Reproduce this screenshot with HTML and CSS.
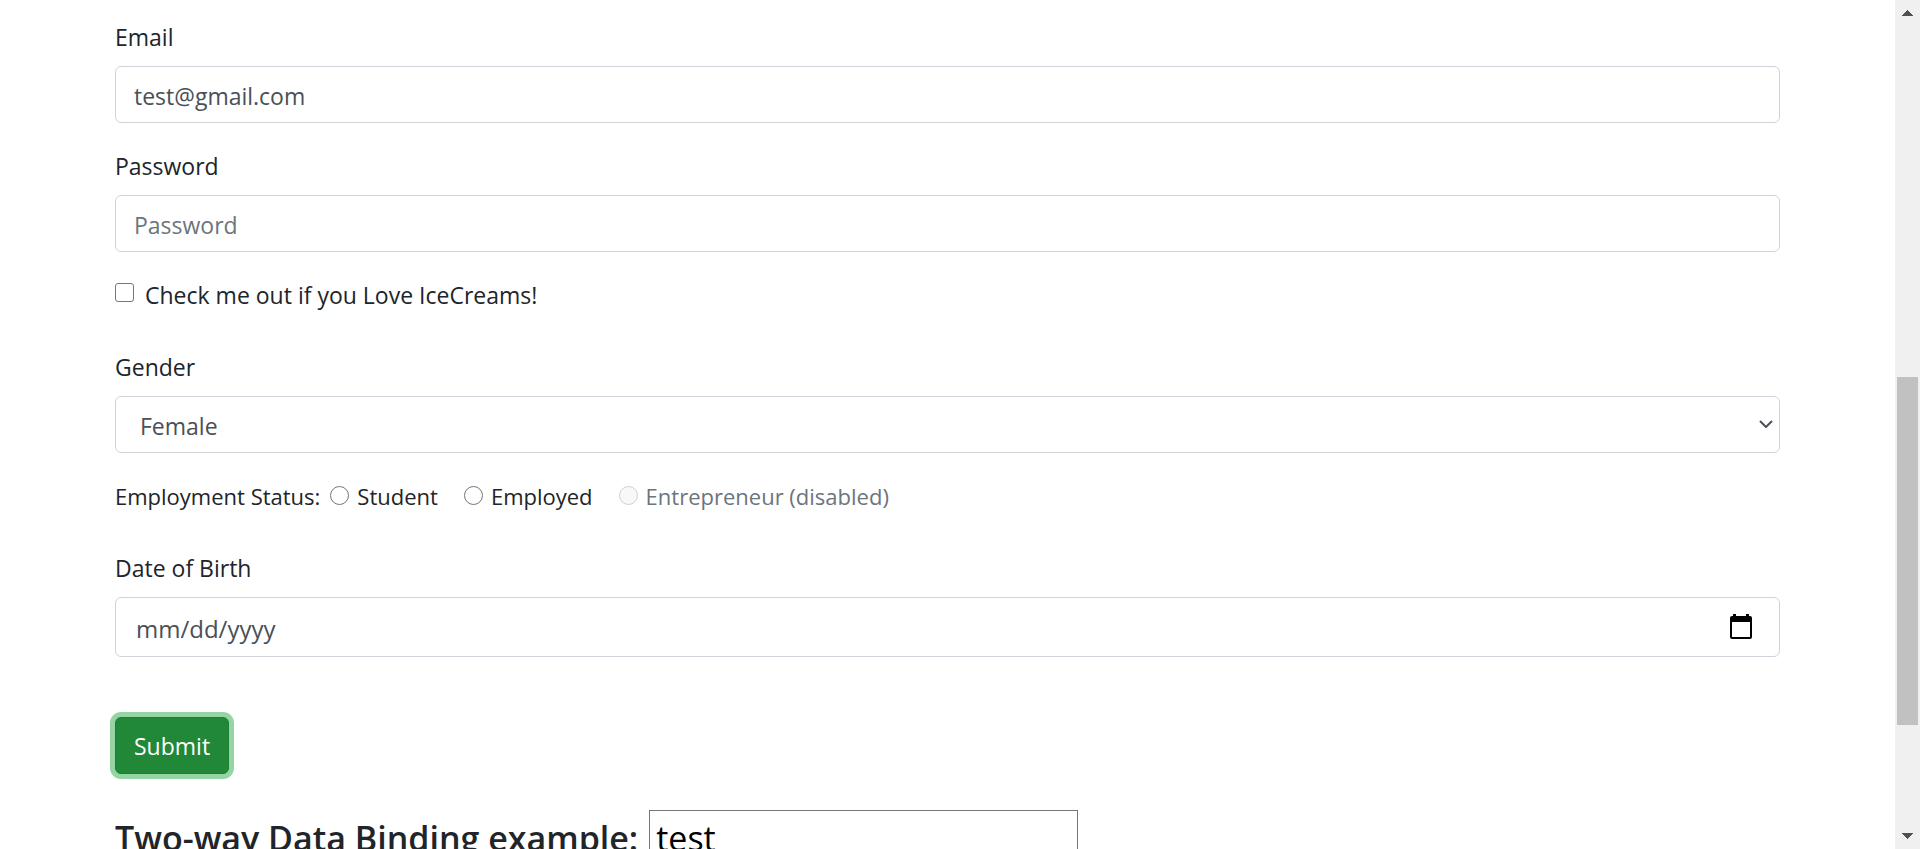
FILE: index.html
```
<!DOCTYPE html>
<html lang="en">
<head>
<meta charset="utf-8">
<title>Form</title>
<link rel="stylesheet" href="styles.css">
</head>
<body>
<div class="window">
  <main class="page">
    <form class="form">
      <div class="group">
        <label for="email">Email</label>
        <input class="control" id="email" type="email" value="test@gmail.com">
      </div>
      <div class="group">
        <label for="password">Password</label>
        <input class="control" id="password" type="password" placeholder="Password">
      </div>
      <div class="check-row">
        <input class="tick" id="icecream" type="checkbox">
        <label for="icecream">Check me out if you Love IceCreams!</label>
      </div>
      <div class="group">
        <label for="gender">Gender</label>
        <div class="field">
          <select class="control select" id="gender">
            <option>Male</option>
            <option selected>Female</option>
          </select>
          <svg class="chevron" viewBox="0 0 14 8" aria-hidden="true"><path d="M1 1l6 6 6-6" fill="none" stroke="#495057" stroke-width="2"/></svg>
        </div>
      </div>
      <div class="status" role="radiogroup" aria-labelledby="status-label">
        <span id="status-label">Employment Status:</span>
        <div class="option"><input class="tick round" id="student" name="status" type="radio"><label for="student">Student</label></div>
        <div class="option"><input class="tick round" id="employed" name="status" type="radio"><label for="employed">Employed</label></div>
        <div class="option muted"><input class="tick round" id="entrepreneur" name="status" type="radio" disabled><label for="entrepreneur">Entrepreneur (disabled)</label></div>
      </div>
      <div class="group">
        <label for="dob">Date of Birth</label>
        <div class="field">
          <input class="control date" id="dob" type="text" placeholder="mm/dd/yyyy">
          <button class="picker" type="button" aria-label="Open calendar"><svg viewBox="0 0 22 25" aria-hidden="true"><path fill="#000" fill-rule="evenodd" d="M3 0h3v2h10V0h3v2h1q2 0 2 2v19q0 2-2 2H2q-2 0-2-2V4q0-2 2-2h1zM2 8v15h18V8z"/></svg></button>
        </div>
      </div>
      <button class="submit" type="button">Submit</button>
    </form>
    <div class="binding">
      <label class="heading" for="binding">Two-way Data Binding example:</label>
      <input class="binding-input" id="binding" type="text" value="test">
    </div>
  </main>
  <div class="scrollbar" aria-hidden="true">
    <svg class="arrow" viewBox="0 0 11 6" shape-rendering="crispEdges"><path fill="#505050" d="M5 0h1v1h1v1h1v1h1v1h1v1h1v1H0V5h1V4h1V3h1V2h1V1h1z"/></svg>
    <div class="track"><div class="thumb"></div></div>
    <svg class="arrow" viewBox="0 0 11 6" shape-rendering="crispEdges"><path fill="#505050" d="M0 0h11v1h-1v1H9v1H8v1H7v1H6v1H5V5H4V4H3V3H2V2H1V1H0z"/></svg>
  </div>
</div>
</body>
</html>
```
FILE: styles.css
```
* { box-sizing: border-box; }
body {
  margin: 0;
  background: #fff;
  color: #212529;
  font-family: "Segoe UI", "Open Sans", "Noto Sans", sans-serif;
  font-size: 23px;
  line-height: 36px;
}
input, select, button { font: inherit; margin: 0; }
.window { display: flex; height: 100vh; overflow: hidden; }
.page { flex: 1; min-width: 0; padding: 19px 115px 0; }
.form { display: flex; flex-direction: column; }
.group { display: flex; flex-direction: column; gap: 11px; margin-bottom: 25px; }
.control {
  width: 100%;
  height: 57px;
  padding: 10px 18px 8px;
  border: 1px solid #ced4da;
  border-radius: 6px;
  background: #fff;
  color: #495057;
}
.control::placeholder { color: #6c757d; opacity: 1; }
.field { position: relative; display: flex; }
.select { appearance: none; padding-left: 24px; }
.chevron { position: absolute; right: 7px; top: 24px; width: 14px; height: 8px; pointer-events: none; }
.date { height: 60px; padding-left: 20px; font-size: 24px; }
.date::placeholder { color: #495057; }
.picker {
  position: absolute;
  right: 28px;
  top: 17px;
  display: flex;
  padding: 0;
  border: 0;
  background: none;
}
.picker svg { width: 22px; height: 25px; }
.check-row { display: flex; gap: 11px; margin-bottom: 36px; }
.tick {
  appearance: none;
  flex: none;
  width: 19px;
  height: 19px;
  margin-top: 6px;
  border: 1px solid #767676;
  border-radius: 3px;
  background: #fff;
}
.round { margin-top: 8px; border-radius: 50%; }
.round:disabled { border-color: #d1d1d1; background: #f8f8f8; }
.status { display: flex; gap: 10px; margin-bottom: 36px; font-size: 22px; }
.option { display: flex; gap: 8px; margin-right: 16px; }
.muted { color: #6c757d; }
.submit {
  align-self: flex-start;
  height: 57px;
  margin-top: 35px;
  padding: 9px 18px;
  border: 1px solid #1e7e34;
  border-radius: 6px;
  background: #218838;
  color: #fff;
  box-shadow: 0 0 0 5px #95d5a3;
}
.binding { display: flex; align-items: center; gap: 11px; margin-top: 36px; font-size: 34px; line-height: 48px; }
.heading { font-weight: 600; white-space: nowrap; }
.binding-input {
  width: 429px;
  height: 56px;
  padding: 2px 6px;
  border: 1px solid #767676;
  background: #fff;
  color: #000;
}
.scrollbar {
  display: flex;
  flex-direction: column;
  align-items: center;
  justify-content: space-between;
  width: 25px;
  padding: 10px 2px;
  background: #f0f0f0;
}
.arrow { width: 11px; height: 6px; flex: none; }
.track { display: flex; flex-direction: column; align-self: stretch; height: 100%; margin: 9px 0; }
.track::before { content: ""; flex: 352; }
.track::after { content: ""; flex: 99; }
.thumb { flex: 348; background: #c1c1c1; }
```
